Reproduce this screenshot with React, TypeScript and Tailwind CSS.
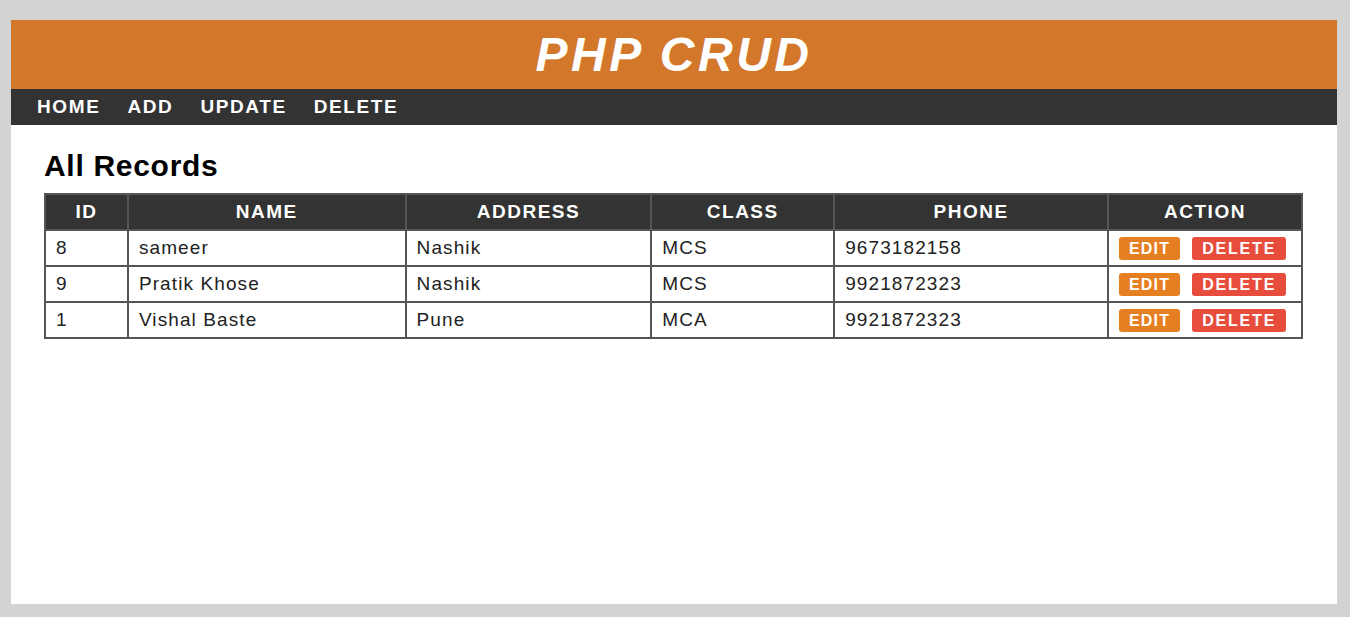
const records = [
  { id: 8, name: "sameer", address: "Nashik", cls: "MCS", phone: "9673182158" },
  { id: 9, name: "Pratik Khose", address: "Nashik", cls: "MCS", phone: "9921872323" },
  { id: 1, name: "Vishal Baste", address: "Pune", cls: "MCA", phone: "9921872323" },
];

const App = () => {
  return (
    <div className="h-[617px] w-full bg-[#d3d3d3] pt-[20px] pl-[11px] font-['Liberation_Sans',Arial,sans-serif]">
      <div className="flex h-[584px] w-[1326px] flex-col bg-white">
        {/* Header */}
        <div className="flex h-[69px] items-center justify-center bg-[#d3782a]">
          <h1 className="text-[48px] leading-none font-bold italic tracking-[3.5px] text-white">PHP CRUD</h1>
        </div>

        {/* Nav */}
        <div className="flex h-[36px] items-center gap-[27px] bg-[#333333] pl-[26px]">
          {["HOME", "ADD", "UPDATE", "DELETE"].map((item) => (
            <a key={item} className="text-[19px] font-bold tracking-[1.6px] text-white">
              {item}
            </a>
          ))}
        </div>

        {/* Content */}
        <div className="px-[33px] pt-[24px]">
          <h2 className="mb-[10px] text-[30px] leading-[34px] font-bold tracking-[0.7px] text-black">All Records</h2>
          <table className="w-[1259px] border-collapse border-2 border-[#555555] text-[19px] tracking-[1.1px] text-[#222222]">
            <thead>
              <tr className="h-[36px] bg-[#333333] text-white">
                <th className="w-[83px] border-2 border-[#555555] font-bold tracking-[1.5px]">ID</th>
                <th className="w-[278px] border-2 border-[#555555] font-bold tracking-[1.5px]">NAME</th>
                <th className="w-[246px] border-2 border-[#555555] font-bold tracking-[1.5px]">ADDRESS</th>
                <th className="w-[183px] border-2 border-[#555555] font-bold tracking-[1.5px]">CLASS</th>
                <th className="w-[274px] border-2 border-[#555555] font-bold tracking-[1.5px]">PHONE</th>
                <th className="w-[194px] border-2 border-[#555555] font-bold tracking-[1.5px]">ACTION</th>
              </tr>
            </thead>
            <tbody>
              {records.map((r) => (
                <tr key={r.id + r.name} className="h-[36px]">
                  <td className="border-2 border-[#555555] px-[10px]">{r.id}</td>
                  <td className="border-2 border-[#555555] px-[10px]">{r.name}</td>
                  <td className="border-2 border-[#555555] px-[10px]">{r.address}</td>
                  <td className="border-2 border-[#555555] px-[10px]">{r.cls}</td>
                  <td className="border-2 border-[#555555] px-[10px]">{r.phone}</td>
                  <td className="border-2 border-[#555555] px-[10px]">
                    <div className="flex gap-[12px]">
                      <button className="h-[23px] rounded-[3px] bg-[#e67e22] px-[10px] text-[16px] font-bold tracking-[1.2px] text-white">
                        EDIT
                      </button>
                      <button className="h-[23px] rounded-[3px] bg-[#e74c3c] px-[10px] text-[16px] font-bold tracking-[1.8px] text-white">
                        DELETE
                      </button>
                    </div>
                  </td>
                </tr>
              ))}
            </tbody>
          </table>
        </div>
      </div>
    </div>
  );
};

export default App;
